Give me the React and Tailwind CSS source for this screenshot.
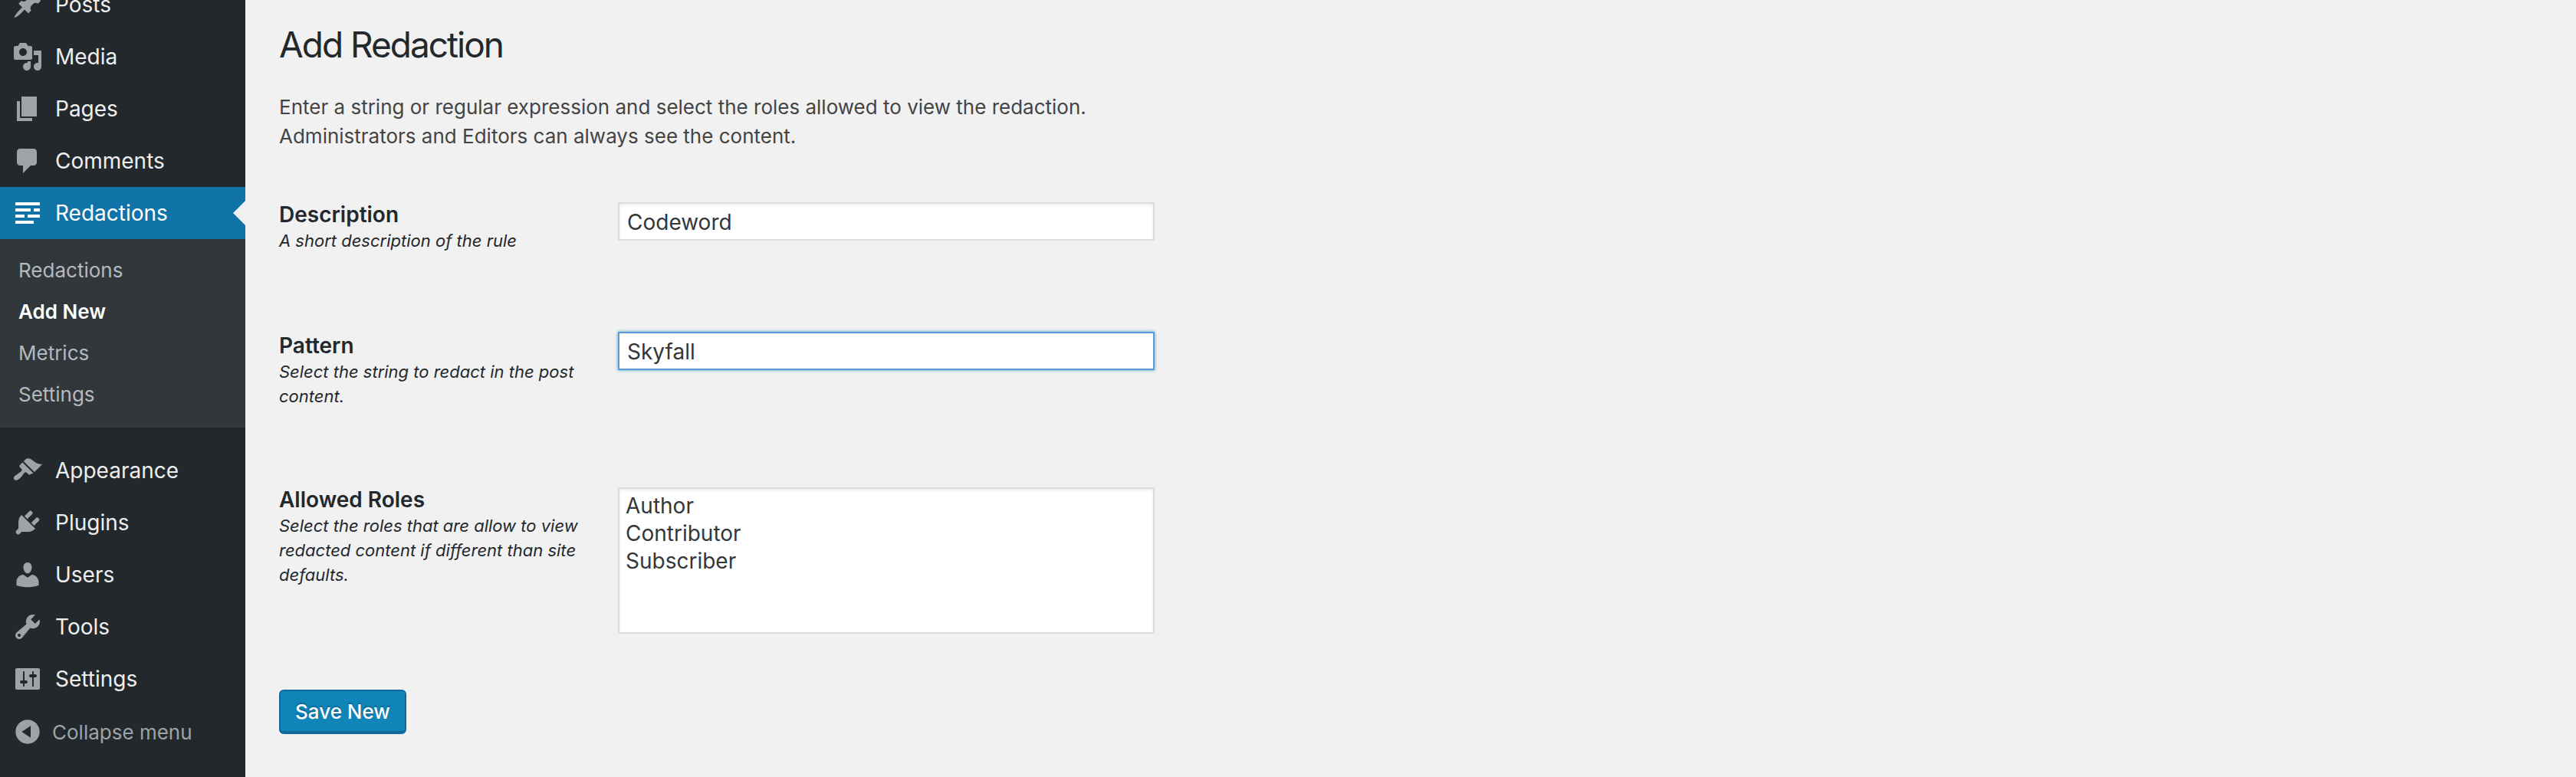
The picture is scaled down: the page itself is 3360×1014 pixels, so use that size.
import React from 'react';

const icons = {
  posts: 'M10.44 3.02l1.82-1.82 6.36 6.35-1.83 1.82c-1.05-.68-2.48-.57-3.41.36l-.75.75c-.92.93-1.04 2.35-.35 3.41l-1.83 1.82-2.41-2.41-2.8 2.79c-.42.42-3.38 2.71-3.8 2.29s1.86-3.39 2.28-3.81l2.79-2.79L4.1 9.36l1.83-1.82c1.05.69 2.48.57 3.4-.36l.75-.75c.93-.92 1.05-2.35.36-3.41z',
  media: 'M13 11V4c0-.55-.45-1-1-1h-1.67L9 1H5L3.67 3H2c-.55 0-1 .45-1 1v7c0 .55.45 1 1 1h10c.55 0 1-.45 1-1zM7 4.5c1.38 0 2.5 1.12 2.5 2.5S8.38 9.5 7 9.5 4.5 8.38 4.5 7 5.62 4.5 7 4.5zM14 6h5v10.5c0 1.38-1.12 2.5-2.5 2.5S14 17.88 14 16.5s1.12-2.5 2.5-2.5c.17 0 .34.02.5.05V9h-3V6zm-4 8.05V13h2v3.5c0 1.38-1.12 2.5-2.5 2.5S7 17.88 7 16.5 8.12 14 9.5 14c.17 0 .34.02.5.05z',
  pages: 'M6 15V2h10v13H6zm-1 1h8v2H3V5h2v11z',
  comments: 'M5 2h9c1.1 0 2 .9 2 2v7c0 1.1-.9 2-2 2h-2l-5 5v-5H5c-1.1 0-2-.9-2-2V4c0-1.1.9-2 2-2z',
  appearance: 'M14.48 11.06L7.41 3.99l1.5-1.5c.5-.56 2.3-.47 3.51.32 1.21.8 1.43 1.28 2.91 2.1 1.18.64 2.45 1.26 4.45.85zm-.71.71L6.7 4.7 4.93 6.47c-.39.39-.39 1.02 0 1.41l1.06 1.06c.39.39.39 1.03 0 1.42-.6.6-1.43 1.11-2.21 1.69-.35.26-.7.53-1.01.84C1.43 13.23.4 14.97 1.4 15.97c1 1 2.74-.03 4.08-1.36.31-.31.58-.66.85-1.02.57-.78 1.08-1.61 1.69-2.21.39-.39 1.02-.39 1.41 0l1.06 1.06c.39.39 1.02.39 1.41 0z',
  plugins: 'M13.11 4.36L9.87 7.6 8 5.73l3.24-3.24c.35-.34 1.05-.2 1.56.32.52.51.66 1.21.31 1.55zm-8 1.77l.91-1.12 9.01 9.01-1.19.84c-.71.71-2.63 1.16-3.82 1.16H6.14L4.9 17.26c-.59.59-1.54.59-2.12 0-.59-.58-.59-1.53 0-2.12l1.24-1.24v-3.88c0-1.13.4-3.19 1.09-3.89zm7.26 3.97l3.24-3.24c.34-.35 1.04-.21 1.55.31.52.51.66 1.21.31 1.55l-3.24 3.25z',
  users: 'M10 9.25c-2.27 0-2.73-3.44-2.73-3.44C7 4.02 7.82 2 9.97 2c2.16 0 2.98 2.02 2.71 3.81 0 0-.41 3.44-2.68 3.44zm0 2.57L12.72 10c2.39 0 4.52 2.33 4.52 4.53v2.49s-3.65 1.13-7.24 1.13c-3.65 0-7.24-1.13-7.24-1.13v-2.49c0-2.25 1.94-4.48 4.47-4.48z',
  tools: 'M16.68 9.77c-1.34 1.34-3.3 1.67-4.95.99l-5.41 6.52c-.99.99-2.59.99-3.58 0s-.99-2.59 0-3.57l6.52-5.42c-.68-1.65-.35-3.61.99-4.95 1.28-1.28 3.12-1.62 4.72-1.06l-2.89 2.89 2.82 2.82 2.86-2.87c.53 1.58.18 3.39-1.08 4.65zM3.81 16.21c.4.39 1.04.39 1.43 0 .4-.4.4-1.04 0-1.43-.39-.4-1.03-.4-1.43 0-.39.39-.39 1.03 0 1.43z',
  settings: 'M18 16V4c0-.55-.45-1-1-1H3c-.55 0-1 .45-1 1v12c0 .55.45 1 1 1h14c.55 0 1-.45 1-1zM8 11h1c.55 0 1 .45 1 1s-.45 1-1 1H8v1.5c0 .28-.22.5-.5.5s-.5-.22-.5-.5V13H6c-.55 0-1-.45-1-1s.45-1 1-1h1V5.5c0-.28.22-.5.5-.5s.5.22.5.5V11zm5-2h-1c-.55 0-1-.45-1-1s.45-1 1-1h1V5.5c0-.28.22-.5.5-.5s.5.22.5.5V7h1c.55 0 1 .45 1 1s-.45 1-1 1h-1v5.5c0 .28-.22.5-.5.5s-.5-.22-.5-.5V9z',
  collapse: 'M10 2.16c4.33 0 7.84 3.51 7.84 7.84s-3.51 7.84-7.84 7.84S2.16 14.33 2.16 10 5.71 2.16 10 2.16zm2 11.72V6.12L6.18 9.97z',
  // redaction lines, not a stock dashicon
  redactions: 'M2 3h16v2H2zM2 7h10v2H2zM14 7h4v2h-4zM2 11h6v2H2zM10 11h8v2h-8zM2 15h12v2H2z',
};

function Icon({ name, className }) {
  return (
    <svg viewBox="0 0 20 20" className={`w-[40px] h-[40px] fill-current shrink-0 ${className}`}>
      <path d={icons[name]} />
    </svg>
  );
}

function MenuItem({ icon, label }) {
  return (
    <a className="flex items-center h-[68px] pl-[16px] text-[28px] text-[#eeeeee]">
      <Icon name={icon} className="text-[#9ea3a8]" />
      <span className="ml-[16px]">{label}</span>
    </a>
  );
}

function Sidebar() {
  return (
    <aside className="w-[320px] shrink-0 bg-[#23282d] -mt-[28px] h-[1042px]">
      <MenuItem icon="posts" label="Posts" />
      <MenuItem icon="media" label="Media" />
      <MenuItem icon="pages" label="Pages" />
      <MenuItem icon="comments" label="Comments" />

      <a className="relative flex items-center h-[68px] pl-[16px] text-[28px] text-white bg-[#0f73a8]">
        <Icon name="redactions" className="text-white" />
        <span className="ml-[16px]">Redactions</span>
        <span className="absolute right-0 top-[18px] border-y-[16px] border-r-[16px] border-y-transparent border-r-[#f1f1f1]"></span>
      </a>
      <div className="bg-[#32373c] h-[246px] pt-[13px] text-[26px] text-[#b4b9be]">
        <a className="flex items-center h-[54px] pl-[24px]">Redactions</a>
        <a className="flex items-center h-[54px] pl-[24px] font-semibold text-white">Add New</a>
        <a className="flex items-center h-[54px] pl-[24px]">Metrics</a>
        <a className="flex items-center h-[54px] pl-[24px]">Settings</a>
      </div>

      <div className="h-[22px]"></div>
      <MenuItem icon="appearance" label="Appearance" />
      <MenuItem icon="plugins" label="Plugins" />
      <MenuItem icon="users" label="Users" />
      <MenuItem icon="tools" label="Tools" />
      <MenuItem icon="settings" label="Settings" />
      <button className="flex items-center h-[70px] pl-[16px] text-[26px] text-[#9ea3a8]">
        <Icon name="collapse" className="text-[#9ea3a8]" />
        <span className="ml-[12px]">Collapse menu</span>
      </button>
    </aside>
  );
}

function Field({ label, hint, height, labelOffset = '', children }) {
  return (
    <div className={`flex ${height}`}>
      <div className={`w-[400px] mr-[42px] shrink-0 ${labelOffset}`}>
        <label className="block text-[28px] leading-[32px] font-semibold text-[#23282d]">{label}</label>
        <p className="mt-[2px] text-[22px] leading-[32px] italic text-[#23282d]">{hint}</p>
      </div>
      {children}
    </div>
  );
}

export default function App() {
  return (
    <div className="flex h-[1014px] overflow-hidden bg-[#f1f1f1] font-['Inter',sans-serif]">
      <Sidebar />
      <main className="flex-1 pl-[44px] pt-[29px]">
        <h1 className="text-[46px] leading-[58px] font-normal tracking-[-2px] text-[#23282d]">Add Redaction</h1>
        <p className="mt-[34px] text-[26px] leading-[38px] text-[#444444]">
          Enter a string or regular expression and select the roles allowed to view the redaction.
          <br />
          Administrators and Editors can always see the content.
        </p>

        <form className="mt-[67px]">
          <Field label="Description" hint="A short description of the rule" height="h-[169px]">
            <input
              readOnly
              value="Codeword"
              className="w-[700px] h-[50px] px-[10px] pt-[2px] bg-white border-2 border-[#dddddd] shadow-[inset_0_2px_4px_rgba(0,0,0,0.07)] text-[28px] text-[#32373c] outline-none"
            />
          </Field>
          <Field label="Pattern" hint="Select the string to redact in the post content." height="h-[203px]" labelOffset="pt-[2px]">
            <input
              readOnly
              value="Skyfall"
              className="w-[700px] h-[50px] px-[10px] pt-[2px] bg-white border-2 border-[#5b9dd9] shadow-[0_0_4px_rgba(30,140,190,0.8)] text-[28px] text-[#32373c] outline-none"
            />
          </Field>
          <Field
            label="Allowed Roles"
            hint="Select the roles that are allow to view redacted content if different than site defaults."
            height="h-[191px]"
          >
            <select
              multiple
              className="w-[700px] h-[191px] pt-[5px] px-[6px] bg-white border-2 border-[#dddddd] shadow-[inset_0_2px_4px_rgba(0,0,0,0.07)] text-[28px] text-[#32373c] outline-none overflow-hidden"
            >
              <option className="h-[36px] leading-[36px] px-[2px]">Author</option>
              <option className="h-[36px] leading-[36px] px-[2px]">Contributor</option>
              <option className="h-[36px] leading-[36px] px-[2px]">Subscriber</option>
            </select>
          </Field>

          <button
            type="button"
            className="mt-[73px] w-[166px] h-[58px] rounded-[6px] bg-[#1285b8] border-2 border-b-4 border-[#0f6a9c] text-[26px] font-medium text-white [text-shadow:0_-2px_2px_#006799]"
          >
            Save New
          </button>
        </form>
      </main>
    </div>
  );
}
